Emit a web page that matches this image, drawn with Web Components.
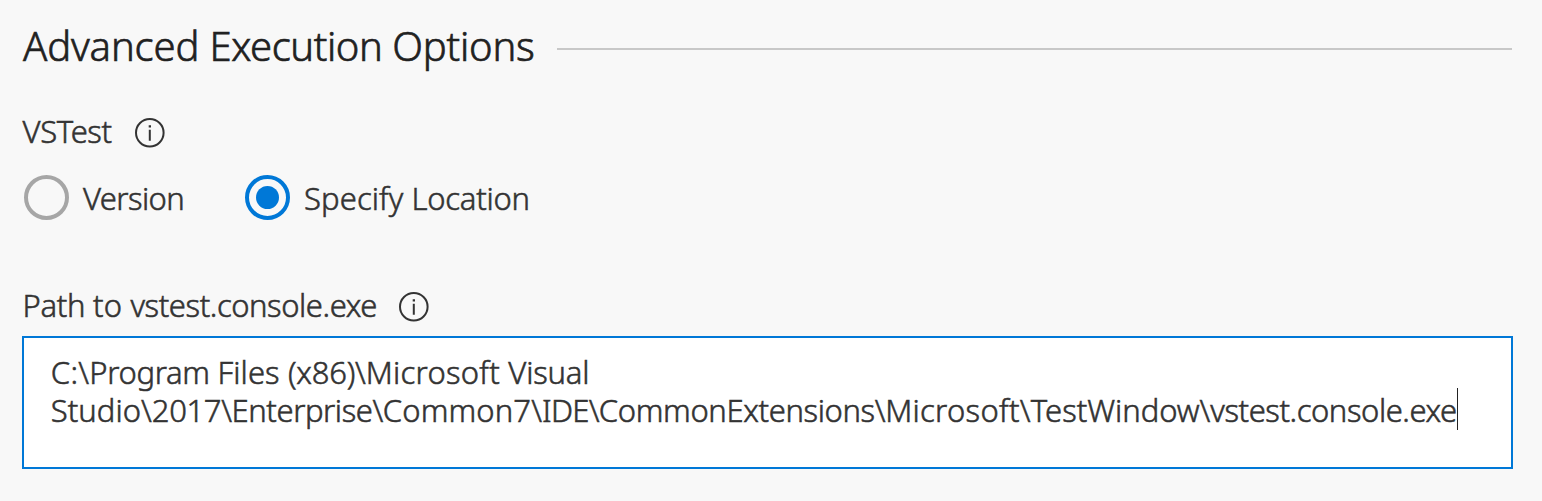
<!DOCTYPE html>
<html lang="en">
<head>
<meta charset="utf-8">
<title>Advanced Execution Options</title>
<style>
html,body{margin:0;height:100%;background:#f8f8f8}
body{font-family:"Noto Sans","Open Sans",sans-serif;font-weight:300;font-size:31px;line-height:38px;color:#333;-webkit-text-stroke:.55px currentColor}
</style>
</head>
<body>
<task-options></task-options>
<script>
const define=(name,html,setup)=>customElements.define(name,class extends HTMLElement{
  connectedCallback(){
    if(this.shadowRoot)return;
    this.attachShadow({mode:'open'}).innerHTML=html;
    if(setup)setup(this);
  }
});

/* A run of text with its own tracking */
define('text-run','<style>:host{display:inline;white-space:pre-wrap}</style><slot></slot>',el=>{
  el.style.letterSpacing=el.getAttribute('track')+'px';
});

define('section-title',`<style>
:host{display:flex;align-items:flex-start;height:53px;font-size:40px;line-height:54px;color:#212121;-webkit-text-stroke:.65px currentColor}
h2{margin:0;font:inherit;width:534px;padding-left:1px;white-space:nowrap}
.rule{flex:1;height:2px;margin-top:29px;background:#c8c8c8}
</style><h2><slot></slot></h2><div class="rule"></div>`);

define('info-icon',`<style>:host{display:block;width:30px;height:30px}svg{display:block}</style>
<svg width="30" height="30" viewBox="0 0 30 30"><circle cx="14.8" cy="14.8" r="13.8" fill="none" stroke="#333" stroke-width="2"/><path d="M13.7 7.2h2.3v2.2h-2.3zM13.8 11.8h2v11h-2z" fill="#333"/></svg>`);

define('field-label',`<style>
:host{display:flex;height:38px;white-space:nowrap}
info-icon{margin-top:6px}
.text{width:var(--label-width);text-indent:.5px}
</style><div class="text"><slot></slot></div><info-icon></info-icon>`);

define('radio-option',`<style>
:host{display:flex;align-items:center;height:45px;line-height:45px;white-space:nowrap}
.ring{box-sizing:border-box;width:45px;height:45px;border:4px solid #a6a6a6;border-radius:50%;display:grid;place-items:center;margin-right:14px}
.label{padding-top:2px}
:host([checked]) .ring{border-color:#0078d7}
:host([checked]) .ring::after{content:"";width:23px;height:23px;border-radius:50%;background:#0078d7}
</style><span class="ring"></span><span class="label"><slot></slot></span>`);

define('path-input',`<style>
:host{display:block;box-sizing:border-box;height:133px;border:2px solid #0078d7;background:#fff;padding:15px 0 0 26.8px;white-space:nowrap}
.line{display:flex;height:38px}
.caret{position:relative;width:1px}
.caret::after{content:"";position:absolute;left:0;top:-3px;width:1px;height:42px;background:#222}
</style>
<div class="line"><slot name="first"></slot></div>
<div class="line"><slot name="second"></slot><span class="caret"></span></div>`);

define('task-options',`<style>
:host{display:block;padding:19px 29px 0 22px}
section-title{margin-right:1px}
.vstest{margin-top:40px;--label-width:112.7px}
.radios{display:flex;margin-top:25px;padding-left:2px}
.version{width:221px}
.path{margin-top:66px;--label-width:377.3px}
path-input{margin-top:12px}
</style>
<section-title><text-run track="-0.15">Advanced </text-run><text-run track="-0.432">Execution </text-run><text-run track="-0.227">Options</text-run></section-title>
<field-label class="vstest"><text-run track="-0.376">VSTest</text-run></field-label>
<div class="radios">
<radio-option class="version"><text-run track="-0.6">Version</text-run></radio-option>
<radio-option class="specify" checked><text-run track="0.1">Specify </text-run><text-run track="-0.25">Location</text-run></radio-option>
</div>
<field-label class="path"><text-run track="-0.269">Path </text-run><text-run track="0.17">to </text-run><text-run track="-0.43">vstest.console.exe</text-run></field-label>
<path-input><span slot="first"><text-run track="0.271">C:\\</text-run><text-run track="-0.312">Program </text-run><text-run track="0.099">Files </text-run><text-run track="-0.209">(x86)\\</text-run><text-run track="0.28">Microsoft </text-run><text-run track="-0.2">Visual</text-run></span><span slot="second"><text-run track="0.031">Studio\\</text-run><text-run track="-0.363">2017\\</text-run><text-run track="-0.422">Enterprise\\</text-run><text-run track="0.118">Common7\\</text-run><text-run track="-0.695">IDE\\</text-run><text-run track="-0.363">CommonExtensions\\</text-run><text-run track="0.301">Microsoft\\</text-run><text-run track="-0.036">TestWindow\\</text-run><text-run track="-0.43">vstest.console.exe</text-run></span></path-input>`);
</script>
</body>
</html>
